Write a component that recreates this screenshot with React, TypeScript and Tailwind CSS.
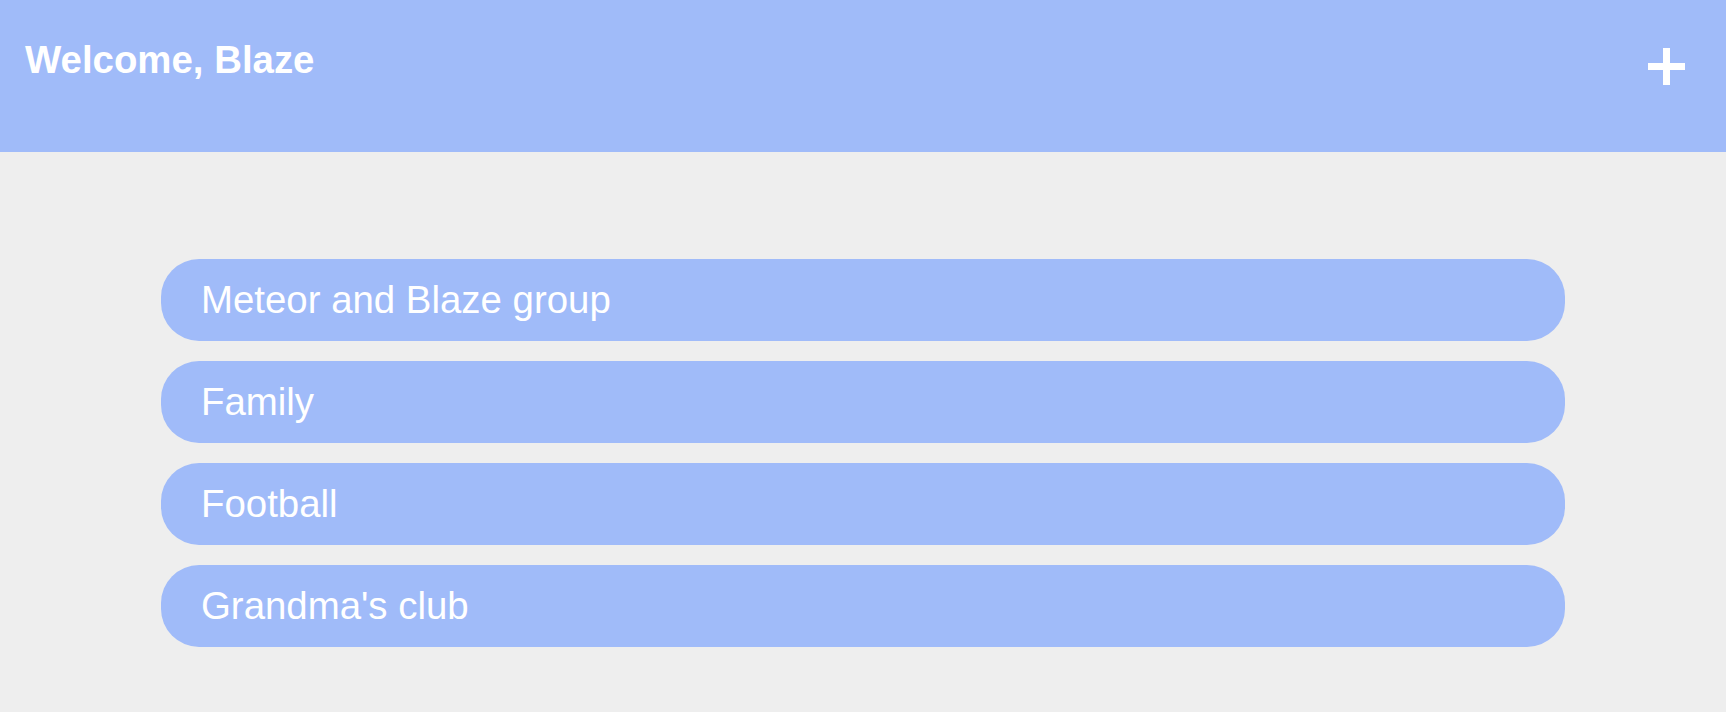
import React from 'react'

const groups = ['Meteor and Blaze group', 'Family', 'Football', "Grandma's club"]

const App = () => {
  return (
    <div className="min-h-[712px] bg-[#eeeeee] font-['Liberation_Sans',Arial,sans-serif]">
      <header className="h-[152px] bg-[#a0bbf9] flex justify-between items-start">
        <h1 className="pl-[25px] pt-[38px] text-[38.4px] leading-[44px] font-bold text-white">Welcome, Blaze</h1>
        <button className="mt-[48px] mr-[41px] block" aria-label="Add group">
          <svg className="block" width="37" height="37" viewBox="0 0 37 37">
            <rect x="15" y="0" width="7" height="37" fill="white" />
            <rect x="0" y="15" width="37" height="7" fill="white" />
          </svg>
        </button>
      </header>
      <ul className="mx-[161px] pt-[107px] flex flex-col gap-[20px]">
        {groups.map((g) => (
          <li key={g} className="h-[82px] rounded-[38px] bg-[#a0bbf9] flex items-center pl-[40px] text-[38.4px] text-white">
            {g}
          </li>
        ))}
      </ul>
    </div>
  )
}

export default App
